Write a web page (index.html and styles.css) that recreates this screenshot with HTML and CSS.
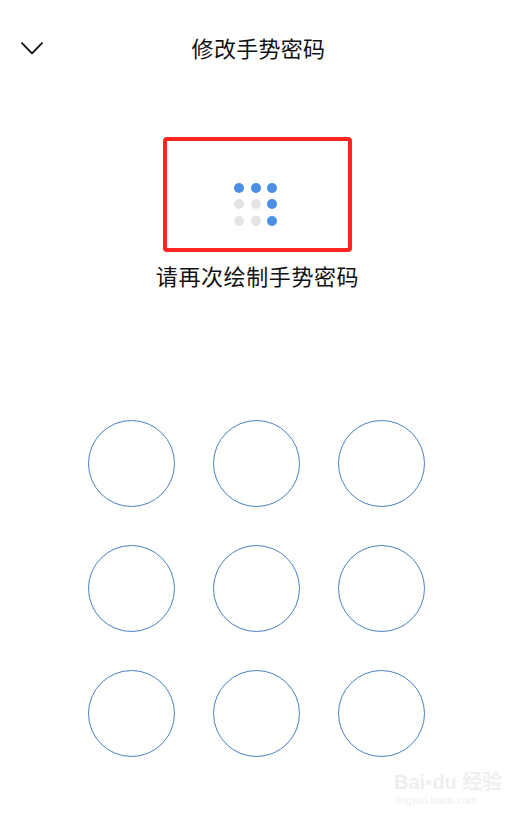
FILE: index.html
```html
<!DOCTYPE html>
<html lang="zh">
<head>
<meta charset="utf-8">
<title>修改手势密码</title>
<link rel="stylesheet" href="styles.css">
</head>
<body>
<div class="page">
  <header class="header">
    <span class="back">
      <svg width="22" height="13" viewBox="0 0 22 13"><path d="M1 1.2 L11 11.4 L21 1.2" fill="none" stroke="#111" stroke-width="1.8" stroke-linecap="round" stroke-linejoin="round"/></svg>
    </span>
    <h1 class="title">修改手势密码</h1>
  </header>

  <section class="preview">
    <div class="frame">
      <div class="mini">
        <i class="dot on"></i><i class="dot on"></i><i class="dot on"></i>
        <i class="dot"></i><i class="dot"></i><i class="dot on"></i>
        <i class="dot"></i><i class="dot"></i><i class="dot on"></i>
      </div>
    </div>
    <p class="hint">请再次绘制手势密码</p>
  </section>

  <section class="pad">
    <div class="node"></div><div class="node"></div><div class="node"></div>
    <div class="node"></div><div class="node"></div><div class="node"></div>
    <div class="node"></div><div class="node"></div><div class="node"></div>
  </section>

  <div class="watermark">
    <span class="wm-logo">Bai<span class="paw">●</span>du 经验</span>
    <span class="wm-url">jingyan.baidu.com</span>
  </div>
</div>
</body>
</html>
```

FILE: styles.css
```css
html, body {
  margin: 0;
  padding: 0;
  background: #fff;
}
body {
  font-family: "Noto Sans CJK SC", "Noto Sans", sans-serif;
  color: #111;
}
.page {
  position: relative;
  width: 515px;
  height: 824px;
  overflow: hidden;
}
.header {
  position: relative;
  height: 96px;
  display: flex;
  align-items: center;
  justify-content: center;
}
.back {
  position: absolute;
  left: 21px;
  top: 42px;
  width: 22px;
  height: 13px;
  display: flex;
}
.title {
  margin: 0 0 2px;
  font-size: 22px;
  font-weight: 400;
  line-height: 30px;
  letter-spacing: 0.3px;
  padding-left: 2px;
}
.preview {
  margin-top: 41px;
  display: flex;
  flex-direction: column;
  align-items: center;
}
.frame {
  box-sizing: border-box;
  width: 189px;
  height: 115px;
  border: 4px solid #ff2420;
  border-radius: 4px;
  display: flex;
  align-items: center;
  justify-content: center;
}
.mini {
  display: grid;
  grid-template-columns: repeat(3, 10px);
  grid-auto-rows: 10px;
  gap: 6.5px;
  margin-left: -4px;
  margin-top: 19px;
}
.dot {
  display: block;
  width: 10px;
  height: 10px;
  border-radius: 50%;
  background: #e4e4e6;
}
.dot.on {
  background: #4a8fe4;
}
.hint {
  margin: 8px 0 0;
  font-size: 22px;
  line-height: 30px;
  font-weight: 400;
  letter-spacing: 0.6px;
}
.pad {
  margin: 130px auto 0;
  width: 337px;
  display: grid;
  grid-template-columns: repeat(3, 87px);
  grid-auto-rows: 87px;
  column-gap: 38px;
  row-gap: 38px;
  transform: translateX(-1px);
}
.node {
  box-sizing: border-box;
  border: 1.5px solid #4a80c2;
  border-radius: 50%;
}
.watermark {
  position: absolute;
  left: 394px;
  top: 770px;
  display: flex;
  flex-direction: column;
  color: #efefef;
  font-family: "Liberation Sans", "Noto Sans CJK SC", sans-serif;
}
.wm-logo {
  font-size: 20px;
  font-weight: 700;
  line-height: 24px;
}
.paw {
  font-size: 12px;
  vertical-align: top;
}
.wm-url {
  font-size: 10px;
  line-height: 14px;
  margin-left: 2px;
}
```
